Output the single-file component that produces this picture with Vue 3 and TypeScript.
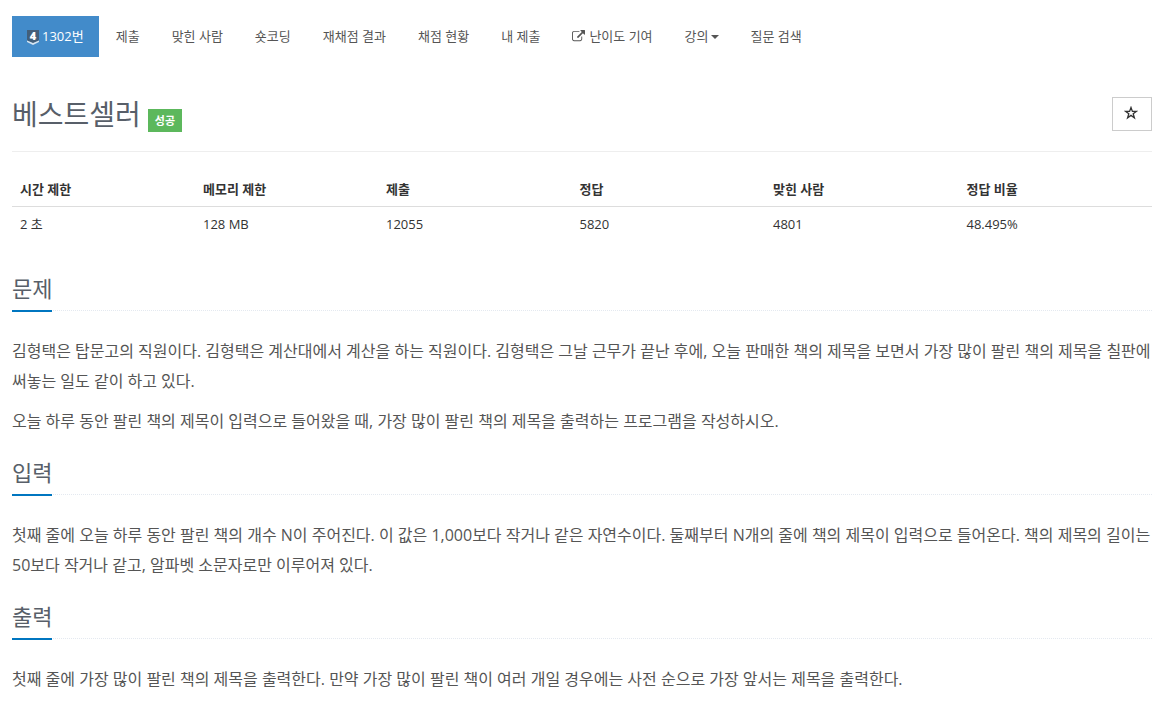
<script setup lang="ts">
interface Section { id: string; title: string; paragraphs: string[] }
interface Stat { label: string; value: string; width: string }

const stats: Stat[] = [
  { label: '시간 제한', value: '2 초', width: '16%' },
  { label: '메모리 제한', value: '128 MB', width: '16%' },
  { label: '제출', value: '12055', width: '17%' },
  { label: '정답', value: '5820', width: '17%' },
  { label: '맞힌 사람', value: '4801', width: '17%' },
  { label: '정답 비율', value: '48.495%', width: '17%' },
]

const sections: Section[] = [
  {
    id: 'description',
    title: '문제',
    paragraphs: [
      '김형택은 탑문고의 직원이다. 김형택은 계산대에서 계산을 하는 직원이다. 김형택은 그날 근무가 끝난 후에, 오늘 판매한 책의 제목을 보면서 가장 많이 팔린 책의 제목을 칠판에 써놓는 일도 같이 하고 있다.',
      '오늘 하루 동안 팔린 책의 제목이 입력으로 들어왔을 때, 가장 많이 팔린 책의 제목을 출력하는 프로그램을 작성하시오.',
    ],
  },
  {
    id: 'input',
    title: '입력',
    paragraphs: [
      '첫째 줄에 오늘 하루 동안 팔린 책의 개수 N이 주어진다. 이 값은 1,000보다 작거나 같은 자연수이다. 둘째부터 N개의 줄에 책의 제목이 입력으로 들어온다. 책의 제목의 길이는 50보다 작거나 같고, 알파벳 소문자로만 이루어져 있다.',
    ],
  },
  {
    id: 'output',
    title: '출력',
    paragraphs: [
      '첫째 줄에 가장 많이 팔린 책의 제목을 출력한다. 만약 가장 많이 팔린 책이 여러 개일 경우에는 사전 순으로 가장 앞서는 제목을 출력한다.',
    ],
  },
]
</script>

<template>
  <main class="page">
    <nav class="menu">
      <a class="item active" href="#problem">
        <svg class="tier" viewBox="0 0 12 15" aria-hidden="true">
          <path d="M0 0h12v10.500L6 13.500L0 10.500z" fill="#435f7a" />
          <path d="M0 10.500l6 2.500 6-2.500v1.500L6 15L0 12z" fill="#d5e4f1" />
          <text x="6" y="10" text-anchor="middle">4</text>
        </svg>
        1302번
      </a>
      <a class="item" href="#submit">제출</a>
      <a class="item" href="#solved">맞힌 사람</a>
      <a class="item" href="#short">숏코딩</a>
      <a class="item" href="#rejudge">재채점 결과</a>
      <a class="item" href="#status">채점 현황</a>
      <a class="item" href="#mine">내 제출</a>
      <a class="item" href="#difficulty">
        <svg class="external" viewBox="0 0 1792 1792" aria-hidden="true">
          <path fill="currentColor" d="M1408 928v320q0 119-84.500 203.500T1120 1536H288q-119 0-203.500-84.500T0 1248V416q0-119 84.500-203.500T288 128h704q14 0 23 9t9 23v64q0 14-9 23t-23 9H288q-66 0-113 47t-47 113v832q0 66 47 113t113 47h832q66 0 113-47t47-113V928q0-14 9-23t23-9h64q14 0 23 9t9 23zm384-864v512q0 26-19 45t-45 19-45-19l-176-176-652 652q-10 10-23 10t-23-10L695 983q-10-10-10-23t10-23l652-652-176-176q-19-19-19-45t19-45 45-19h512q26 0 45 19t19 45z" />
        </svg>
        난이도 기여
      </a>
      <a class="item" href="#lecture">강의<span class="caret"></span></a>
      <a class="item" href="#questions">질문 검색</a>
    </nav>

    <header id="problem" class="heading">
      <h1>베스트셀러</h1>
      <span class="badge">성공</span>
      <button class="star" type="button" aria-label="즐겨찾기">
        <svg viewBox="0 0 14 14" aria-hidden="true">
          <path d="M7 1.500l1.400 3.900h4.100L9.200 7.800l1.200 4L7 9.400l-3.400 2.400 1.200-4L1.500 5.400h4.100z" fill="none" stroke="currentColor" stroke-width="1.300" />
        </svg>
      </button>
    </header>

    <table class="stats">
      <thead>
        <tr><th v-for="s in stats" :key="s.label" scope="col" :style="{ width: s.width }">{{ s.label }}</th></tr>
      </thead>
      <tbody>
        <tr><td v-for="s in stats" :key="s.label">{{ s.value }}</td></tr>
      </tbody>
    </table>

    <section v-for="s in sections" :id="s.id" :key="s.id" class="section">
      <div class="headline"><h2>{{ s.title }}</h2></div>
      <p v-for="p in s.paragraphs" :key="p">{{ p }}</p>
    </section>
  </main>
</template>

<style>
body { background: #fff; }
</style>

<style scoped>
.page {
  padding: 16px 18px 0 12px;
  font-family: "Open Sans", "Noto Sans CJK KR", sans-serif;
  font-size: 13px;
  line-height: 20px;
  color: #333;
}
.menu { display: flex; gap: 2px; }
.item {
  display: flex;
  align-items: center;
  padding: 10px 15px 11px;
  white-space: nowrap;
  color: #555;
  text-decoration: none;
}
.item.active { background: #428bca; color: #fff; }
.tier { width: 12px; height: 15px; margin: 2px 3px 0 0; overflow: visible; }
.tier text { font: 800 11px "Open Sans", sans-serif; fill: #fff; }
.external { width: 13px; height: 13px; margin-right: 4px; }
.caret { margin: 2px 0 0 2px; border: 4px solid transparent; border-top-color: currentColor; border-bottom: 0; }
.heading {
  display: flex;
  align-items: center;
  margin-top: 30px;
  padding-bottom: 10px;
  height: 54px;
  border-bottom: 1px solid #eee;
}
h1, h2 { margin: 0; font-weight: 400; color: #585f69; }
h1 { font-size: 28px; line-height: 40px; }
.badge {
  margin: 12px 0 0 7px;
  padding: 2px 7px;
  background: #5cb85c;
  color: #fff;
  font-size: 11px;
  font-weight: 700;
  line-height: 19px;
}
.star {
  display: flex;
  align-items: center;
  justify-content: center;
  margin-left: auto;
  width: 40px;
  height: 34px;
  padding: 0 2px 2px 0;
  border: 1px solid #ccc;
  background: #fff;
  color: #333;
}
.star svg { width: 14px; height: 14px; }
.stats { width: 100%; margin-top: 19px; border-collapse: collapse; table-layout: fixed; }
th, td { padding: 8px; text-align: left; line-height: 19px; }
th { padding: 9px 8px 7px; border-bottom: 1px solid #ddd; font-weight: 700; }
.section { padding-top: 30px; }
.section + .section { padding-top: 10px; }
.headline { margin-bottom: 25px; border-bottom: 1px dotted #e4e9f0; display: flex; }
h2 { margin-bottom: -2px; padding-bottom: 5px; border-bottom: 2px solid #0076c0; font-size: 22px; line-height: 33px; }
p { margin: 0 0 10px; font-size: 16px; line-height: 30px; color: #555; }
</style>
